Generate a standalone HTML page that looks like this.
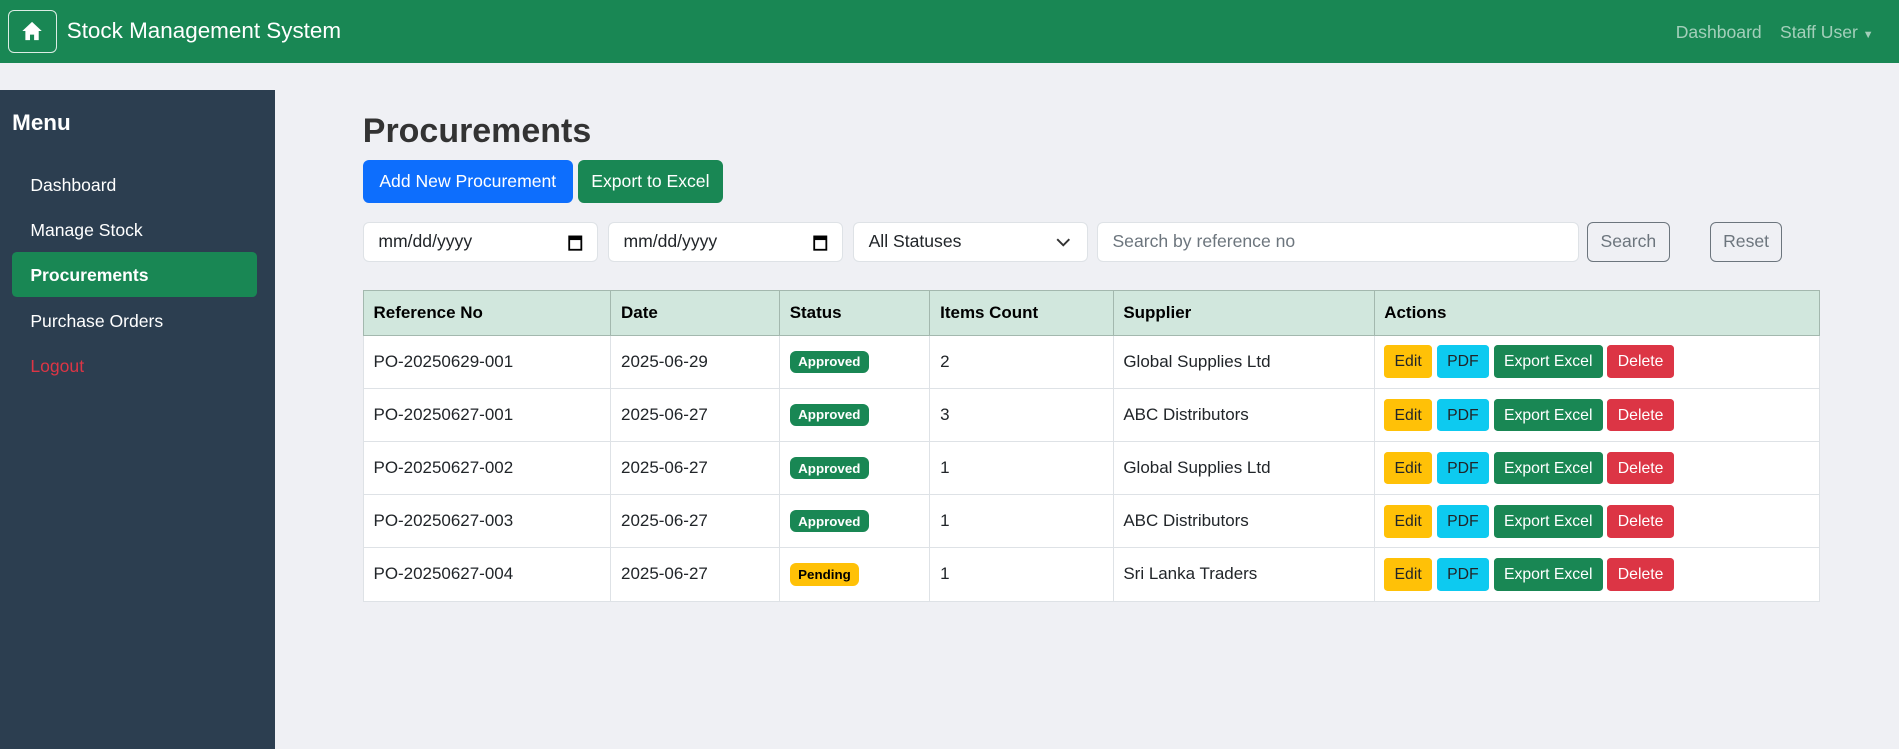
<!DOCTYPE html>
<html><head><meta charset="utf-8"><style>
html,body{margin:0;padding:0;}
body{zoom:1.2134;width:1565px;height:617px;overflow:hidden;background:#eff0f4;font-family:"Liberation Sans",sans-serif;font-size:14.5px;color:#212529;position:relative}
.nav{position:absolute;left:0;top:0;width:1565px;height:52px;background:#198754}
.home{position:absolute;left:7px;top:8px;width:38px;height:34px;border:1px solid rgba(255,255,255,.85);border-radius:5px}
.brand{position:absolute;left:55px;top:15px;color:#fff;font-size:18.5px}
.nr{position:absolute;top:18px;color:rgba(255,255,255,.6);font-size:14.5px}
.side{position:absolute;left:0;top:74px;width:227px;height:543px;background:#2c3e50}
.side h4{position:absolute;left:10px;top:17px;margin:0;color:#fff;font-size:18.5px;font-weight:bold}
.si{position:absolute;left:25px;color:#fff;font-size:14.5px}
.act{position:absolute;left:10px;top:134px;width:202px;height:37px;background:#198754;border-radius:4px}
h2{position:absolute;left:299px;top:92px;margin:0;font-size:28px;font-weight:bold;color:#333}
.btn{position:absolute;height:35px;line-height:35px;border-radius:5px;color:#fff;font-size:14.5px;text-align:center}
.in{position:absolute;top:183px;height:33px;background:#fff;border:1px solid #dee2e6;border-radius:5px;box-sizing:border-box;line-height:31px;padding-left:12px;font-size:14.5px}
.ob{position:absolute;top:183px;height:33px;border:1px solid #6c757d;border-radius:5px;box-sizing:border-box;line-height:31px;text-align:center;color:#6c757d;font-size:14.5px}
table{position:absolute;left:299px;top:239px;width:1200px;border-collapse:collapse;background:#fff;table-layout:fixed}
th,td{border:1px solid #dee2e6;text-align:left;padding:0 8px;font-size:14px;overflow:hidden;white-space:nowrap}
th{background:#d1e7dd;height:36px;border-color:#a3b8ae;font-weight:bold;color:#000}
td{height:43px}
.bd{display:inline-block;font-size:11px;font-weight:bold;padding:3px 7px;border-radius:5px;color:#fff;background:#198754}
.pd{background:#ffc107;color:#000}
.a{display:inline-block;height:27px;line-height:28px;padding:0 8.5px;border-radius:3px;font-size:13px;vertical-align:middle}
</style></head><body>
<div class="nav">
<div class="home"><svg width="38" height="34" viewBox="0 0 38 34"><path d="M19 9 L11 16.5 H13.5 V24 H17.3 V19.5 H20.7 V24 H24.5 V16.5 H27 Z" fill="#fff"/></svg></div>
<div class="brand">Stock Management System</div>
<div class="nr" style="left:1381px">Dashboard</div>
<div class="nr" style="left:1467px">Staff User <span style="font-size:9px">▼</span></div>
</div>
<div class="side">
<h4>Menu</h4>
<div class="si" style="top:70px">Dashboard</div>
<div class="si" style="top:107px">Manage Stock</div>
<div class="act"></div>
<div class="si" style="top:144px;font-weight:bold">Procurements</div>
<div class="si" style="top:182px">Purchase Orders</div>
<div class="si" style="top:219px;color:#dc3545">Logout</div>
</div>
<h2>Procurements</h2>
<div class="btn" style="left:299px;top:132px;width:173px;background:#0d6efd">Add New Procurement</div>
<div class="btn" style="left:476px;top:132px;width:120px;background:#198754">Export to Excel</div>
<div class="in" style="left:299px;width:194px">mm/dd/yyyy<svg style="position:absolute;right:12px;top:9px" width="12" height="14" viewBox="0 0 12 14"><rect x="1" y="2" width="10" height="11" fill="none" stroke="#000" stroke-width="1.5"/><rect x="1" y="2" width="10" height="3" fill="#000"/></svg></div>
<div class="in" style="left:501px;width:194px">mm/dd/yyyy<svg style="position:absolute;right:12px;top:9px" width="12" height="14" viewBox="0 0 12 14"><rect x="1" y="2" width="10" height="11" fill="none" stroke="#000" stroke-width="1.5"/><rect x="1" y="2" width="10" height="3" fill="#000"/></svg></div>
<div class="in" style="left:703px;width:194px">All Statuses<svg style="position:absolute;right:14px;top:12px" width="12" height="8" viewBox="0 0 12 8"><path d="M1 1 L6 6 L11 1" fill="none" stroke="#333" stroke-width="1.6"/></svg></div>
<div class="in" style="left:904px;width:397px;color:#6c757d">Search by reference no</div>
<div class="ob" style="left:1308px;width:68px">Search</div>
<div class="ob" style="left:1409px;width:60px">Reset</div>
<table>
<colgroup><col style="width:204px"><col style="width:139px"><col style="width:124px"><col style="width:151px"><col style="width:215px"><col style="width:367px"></colgroup>
<tr><th>Reference No</th><th>Date</th><th>Status</th><th>Items Count</th><th>Supplier</th><th>Actions</th></tr>
<tr><td>PO-20250629-001</td><td>2025-06-29</td><td><span class="bd">Approved</span></td><td>2</td><td>Global Supplies Ltd</td><td><span class="a" style="background:#ffc107">Edit</span> <span class="a" style="background:#0dcaf0">PDF</span> <span class="a" style="background:#198754;color:#fff">Export Excel</span> <span class="a" style="background:#dc3545;color:#fff">Delete</span></td></tr>
<tr><td>PO-20250627-001</td><td>2025-06-27</td><td><span class="bd">Approved</span></td><td>3</td><td>ABC Distributors</td><td><span class="a" style="background:#ffc107">Edit</span> <span class="a" style="background:#0dcaf0">PDF</span> <span class="a" style="background:#198754;color:#fff">Export Excel</span> <span class="a" style="background:#dc3545;color:#fff">Delete</span></td></tr>
<tr><td>PO-20250627-002</td><td>2025-06-27</td><td><span class="bd">Approved</span></td><td>1</td><td>Global Supplies Ltd</td><td><span class="a" style="background:#ffc107">Edit</span> <span class="a" style="background:#0dcaf0">PDF</span> <span class="a" style="background:#198754;color:#fff">Export Excel</span> <span class="a" style="background:#dc3545;color:#fff">Delete</span></td></tr>
<tr><td>PO-20250627-003</td><td>2025-06-27</td><td><span class="bd">Approved</span></td><td>1</td><td>ABC Distributors</td><td><span class="a" style="background:#ffc107">Edit</span> <span class="a" style="background:#0dcaf0">PDF</span> <span class="a" style="background:#198754;color:#fff">Export Excel</span> <span class="a" style="background:#dc3545;color:#fff">Delete</span></td></tr>
<tr><td>PO-20250627-004</td><td>2025-06-27</td><td><span class="bd pd">Pending</span></td><td>1</td><td>Sri Lanka Traders</td><td><span class="a" style="background:#ffc107">Edit</span> <span class="a" style="background:#0dcaf0">PDF</span> <span class="a" style="background:#198754;color:#fff">Export Excel</span> <span class="a" style="background:#dc3545;color:#fff">Delete</span></td></tr>
</table>
</body></html>
